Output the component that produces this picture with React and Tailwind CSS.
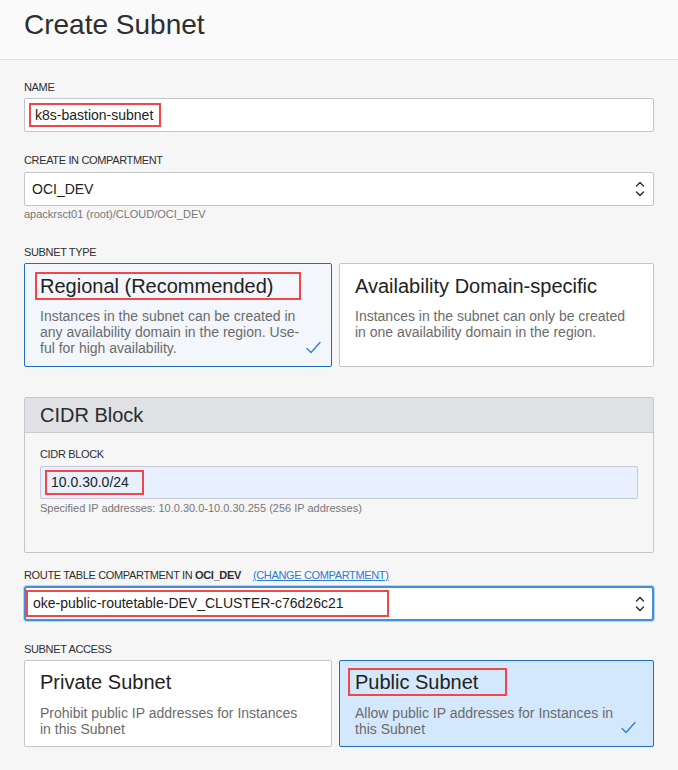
import React from "react";

const Label = ({ children, className = "" }) => (
  <div className={"text-[11px] leading-[14px] uppercase tracking-[-0.35px] text-[#2f2f2f] " + className}>
    {children}
  </div>
);

const Chevrons = () => (
  <svg width="10" height="18" viewBox="0 0 10 18" fill="none" stroke="#333" strokeWidth="1.5" strokeLinecap="round" strokeLinejoin="round">
    <path d="M1.5 6 L5 2.5 L8.5 6" />
    <path d="M1.5 12 L5 15.5 L8.5 12" />
  </svg>
);

const Check = () => (
  <svg width="15" height="13" viewBox="0 0 15 13" fill="none" stroke="#2a7fd4" strokeWidth="1.3" strokeLinecap="round" strokeLinejoin="round">
    <path d="M1 7.5 L5 11.5 L14 1.5" />
  </svg>
);

const RedBox = ({ w, h, children, className = "" }) => (
  <div className={"border-2 border-[#f2464b] flex items-center " + className} style={{ width: w, height: h }}>
    {children}
  </div>
);

export default function App() {
  return (
    <div className="w-[678px] h-[770px] overflow-hidden bg-[#f6f6f6] text-[#333] font-['Liberation_Sans',Arial,sans-serif]">
      <header className="h-[60px] bg-[#fafafa] border-b border-[#e2e2e2] px-6 pt-[11px]">
        <h1 className="text-[28px] leading-none text-[#2e2e2e]">Create Subnet</h1>
      </header>

      <div className="px-6">
        <Label className="mt-[20px]">Name</Label>
        <div className="mt-[4px] h-[34px] bg-white border border-[#c4c6cc] rounded-[2px] pl-[4px] flex items-center">
          <RedBox w={132} h={24} className="pl-[4px]">
            <span className="text-[14px] text-[#222]">k8s-bastion-subnet</span>
          </RedBox>
        </div>

        <Label className="mt-[21px]">Create in Compartment</Label>
        <div className="mt-[5px] h-[34px] bg-white border border-[#c4c6cc] rounded-[2px] pl-[7px] pr-[8px] flex items-center justify-between">
          <span className="text-[14px] text-[#222]">OCI_DEV</span>
          <Chevrons />
        </div>
        <div className="mt-[2px] text-[11px] leading-[12px] text-[#777]">
          apackrsct01 (root)/CLOUD/OCI_DEV
        </div>

        <Label className="mt-[25px]">Subnet Type</Label>
        <div className="mt-[4px] grid grid-cols-[308px_1fr] gap-[7px]">
          <div className="relative h-[104px] bg-[#f3f7fc] border border-[#1c6fc4] rounded-[2px] pl-[10px] pt-[8px]">
            <RedBox w={266} h={28} className="pl-[3px]">
              <span className="text-[20px] leading-none text-[#222]">Regional (Recommended)</span>
            </RedBox>
            <p className="mt-[8px] pl-[5px] text-[14px] leading-[16px] text-[#6b6b6b]">
              Instances in the subnet can be created in
              <br />
              any availability domain in the region. Use-
              <br />
              ful for high availability.
            </p>
            <div className="absolute right-[10px] bottom-[12px]">
              <Check />
            </div>
          </div>
          <div className="h-[104px] bg-white border border-[#c4c6cc] rounded-[2px] pl-[10px] pt-[8px]">
            <div className="h-[28px] pl-[5px] flex items-center">
              <span className="text-[20px] leading-none text-[#222]">Availability Domain-specific</span>
            </div>
            <p className="mt-[8px] pl-[5px] text-[14px] leading-[16px] text-[#6b6b6b]">
              Instances in the subnet can only be created
              <br />
              in one availability domain in the region.
            </p>
          </div>
        </div>

        <div className="mt-[30px] h-[156px] border border-[#c4c6cc] rounded-[2px] overflow-hidden">
          <div className="h-[35px] bg-[#dfe1e4] border-b border-[#c9ccd1] pl-[15px] flex items-center">
            <span className="text-[20px] leading-none text-[#2a2a2a]">CIDR Block</span>
          </div>
          <div className="px-[15px]">
            <Label className="mt-[14px]">CIDR Block</Label>
            <div className="mt-[5px] h-[33px] bg-[#e8f0fe] border border-[#c4cad6] rounded-[2px] pl-[4px] flex items-center">
              <RedBox w={99} h={25} className="pl-[4px]">
                <span className="text-[14px] text-[#222]">10.0.30.0/24</span>
              </RedBox>
            </div>
            <div className="mt-[3px] text-[11px] leading-[12px] text-[#777]">
              Specified IP addresses: 10.0.30.0-10.0.30.255 (256 IP addresses)
            </div>
          </div>
        </div>

        <div className="mt-[15px] flex items-center h-[14px]">
          <Label>Route Table Compartment in <span className="font-bold">OCI_DEV</span></Label>
          <a className="ml-[12px] text-[11px] leading-[14px] tracking-[-0.35px] text-[#2a7bd4] underline">(CHANGE COMPARTMENT)</a>
        </div>
        <div className="mt-[4px] h-[35px] bg-white border-2 border-[#3d8fe0] rounded-[3px] shadow-[0_0_0_1px_#b5d3f2] pr-[7px] flex items-center justify-between">
          <RedBox w={363} h={27} className="pl-[5px]">
            <span className="text-[14px] text-[#222]">oke-public-routetable-DEV_CLUSTER-c76d26c21</span>
          </RedBox>
          <Chevrons />
        </div>

        <Label className="mt-[21px]">Subnet Access</Label>
        <div className="mt-[4px] grid grid-cols-[308px_1fr] gap-[7px]">
          <div className="h-[87px] bg-white border border-[#c4c6cc] rounded-[2px] pl-[10px] pt-[7px]">
            <div className="h-[28px] pl-[5px] flex items-center">
              <span className="text-[20px] leading-none text-[#222]">Private Subnet</span>
            </div>
            <p className="mt-[9px] pl-[5px] text-[14px] leading-[16px] text-[#6b6b6b]">
              Prohibit public IP addresses for Instances
              <br />
              in this Subnet
            </p>
          </div>
          <div className="relative h-[87px] bg-[#d3e8fc] border border-[#1c6fc4] rounded-[2px] pl-[8px] pt-[7px]">
            <RedBox w={159} h={28} className="pl-[5px]">
              <span className="text-[20px] leading-none text-[#222]">Public Subnet</span>
            </RedBox>
            <p className="mt-[9px] pl-[7px] text-[14px] leading-[16px] text-[#6b6b6b]">
              Allow public IP addresses for Instances in
              <br />
              this Subnet
            </p>
            <div className="absolute right-[17px] bottom-[12px]">
              <Check />
            </div>
          </div>
        </div>
      </div>
    </div>
  );
}
